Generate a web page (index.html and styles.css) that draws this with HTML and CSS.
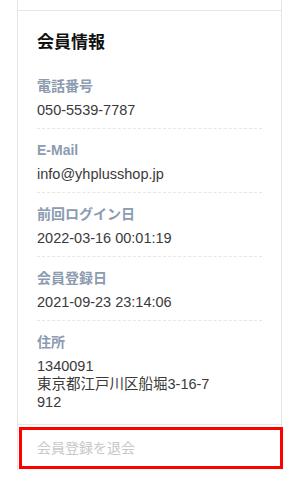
FILE: index.html
```html
<!DOCTYPE html>
<html lang="ja">
<head>
    <meta charset="UTF-8">
    <meta name="viewport" content="width=device-width, initial-scale=1.0">
    <title>会員情報</title>
    <link rel="stylesheet" href="styles.css">
</head>
<body>
    <div class="panel">
        <div class="panel-top"></div>

        <!-- Member info -->
        <div class="member">
            <h2>会員情報</h2>
            <dl class="info-list">
                <div class="info-item">
                    <dt>電話番号</dt>
                    <dd>050-5539-7787</dd>
                </div>
                <div class="info-item">
                    <dt>E-Mail</dt>
                    <dd>info@yhplusshop.jp</dd>
                </div>
                <div class="info-item">
                    <dt>前回ログイン日</dt>
                    <dd>2022-03-16 00:01:19</dd>
                </div>
                <div class="info-item">
                    <dt>会員登録日</dt>
                    <dd>2021-09-23 23:14:06</dd>
                </div>
                <div class="info-item last">
                    <dt>住所</dt>
                    <dd>1340091<br>東京都江戸川区船堀3-16-7<br>912</dd>
                </div>
            </dl>
        </div>

        <div class="withdraw">
            <a href="#">会員登録を退会</a>
        </div>
    </div>
</body>
</html>
```

FILE: styles.css
```css
body {
    margin: 0;
    background: #fff;
    font-family: "Liberation Sans", Arial, "Noto Sans CJK JP", sans-serif;
    color: #333;
}
.panel {
    margin: 0 10px 0 17px;
    border-left: 1px solid #e6e6e6;
    border-right: 1px solid #e6e6e6;
}
.panel-top {
    height: 10px;
    border-bottom: 1px solid #e6e6e6;
}
.member {
    padding: 20px 19px 13px;
    border-bottom: 1px solid #e6e6e6;
}
.member h2 {
    margin: 0 0 21px;
    font-size: 17px;
    line-height: 24px;
    font-weight: bold;
    color: #111;
}
.info-list {
    margin: 0;
}
.info-item {
    padding-bottom: 9px;
    margin-bottom: 11px;
    border-bottom: 1px dashed #e6e6e6;
}
.info-item.last {
    padding-bottom: 0;
    margin-bottom: 0;
    border-bottom: none;
}
.info-item dt {
    font-size: 14px;
    line-height: 20px;
    font-weight: bold;
    color: #8b9bb0;
}
.info-item dd {
    margin: 5px 0 0;
    font-size: 14.5px;
    line-height: 18px;
    color: #3a3a3a;
}
.withdraw {
    padding: 2px 0 1px;
}
.withdraw a {
    display: block;
    margin: 0 -2px 0 1px;
    padding-left: 15px;
    border: 3px solid #ff0000;
    font-size: 14px;
    line-height: 36px;
    color: #c8c8c8;
    text-decoration: none;
}
```
